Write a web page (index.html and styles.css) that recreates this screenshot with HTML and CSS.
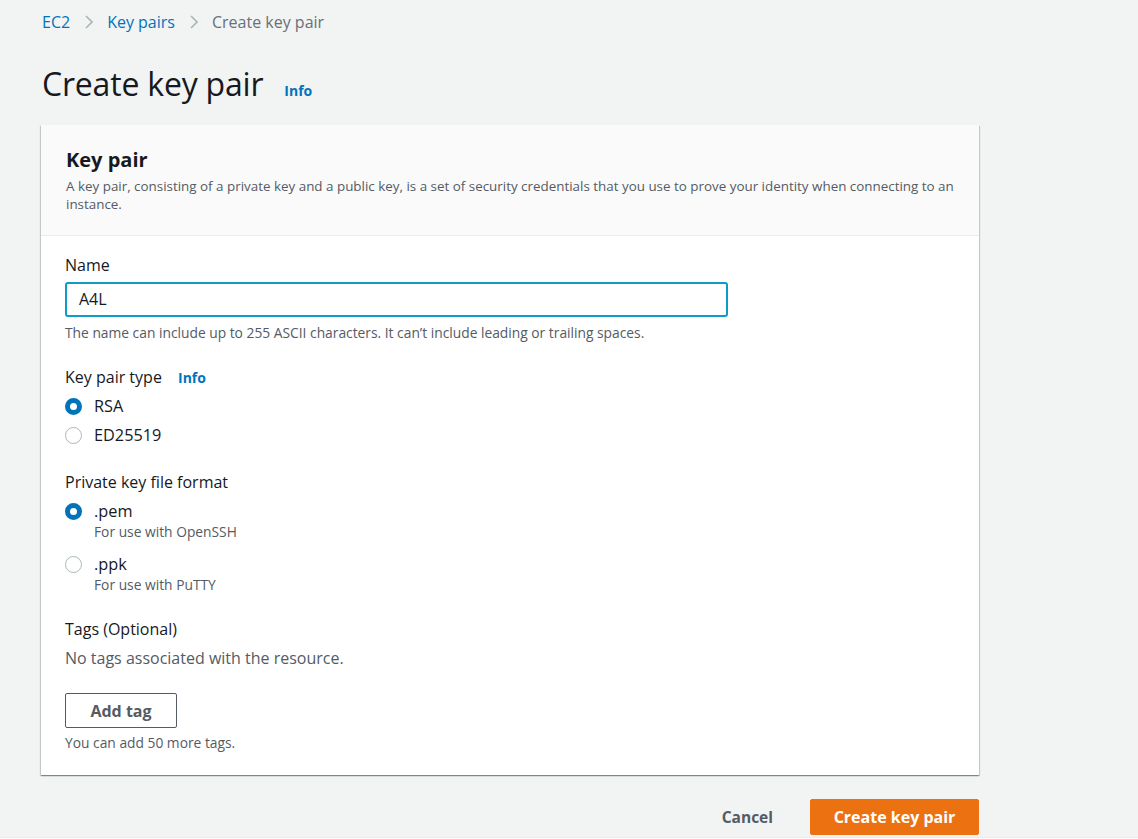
FILE: index.html
```html
<!DOCTYPE html>
<html lang="en">
<head>
<meta charset="utf-8">
<title>Create key pair</title>
<link rel="stylesheet" href="styles.css">
</head>
<body>
<div class="page">
  <nav class="breadcrumb">
    <a class="crumb-link" href="#">EC2</a>
    <svg class="chev" width="8" height="14" viewBox="0 0 8 14"><path d="M1 1l6 6-6 6" fill="none" stroke="#aab7b8" stroke-width="1.6"/></svg>
    <a class="crumb-link" href="#">Key pairs</a>
    <svg class="chev" width="8" height="14" viewBox="0 0 8 14"><path d="M1 1l6 6-6 6" fill="none" stroke="#aab7b8" stroke-width="1.6"/></svg>
    <span class="crumb-current">Create key pair</span>
  </nav>

  <div class="title-row">
    <h1 class="title">Create key pair</h1>
    <a class="info" href="#">Info</a>
  </div>

  <section class="card">
    <header class="card-header">
      <h2 class="card-title">Key pair</h2>
      <p class="card-desc">A key pair, consisting of a private key and a public key, is a set of security credentials that you use to prove your identity when connecting to an instance.</p>
    </header>
    <div class="card-body">
      <div class="label">Name</div>
      <div class="input">A4L</div>
      <div class="hint hint-name">The name can include up to 255 ASCII characters. It can’t include leading or trailing spaces.</div>

      <div class="label label-gap">Key pair type <a class="info info-small" href="#">Info</a></div>
      <div class="radio first"><span class="dot checked"></span><span class="radio-text">RSA</span></div>
      <div class="radio second"><span class="dot"></span><span class="radio-text">ED25519</span></div>

      <div class="label label-gap">Private key file format</div>
      <div class="radio first-b"><span class="dot checked"></span><span class="radio-text">.pem</span></div>
      <div class="radio-desc">For use with OpenSSH</div>
      <div class="radio third"><span class="dot"></span><span class="radio-text">.ppk</span></div>
      <div class="radio-desc">For use with PuTTY</div>

      <div class="label label-gap">Tags (Optional)</div>
      <div class="empty">No tags associated with the resource.</div>
      <button class="btn-secondary" type="button">Add tag</button>
      <div class="hint">You can add 50 more tags.</div>
    </div>
  </section>

  <div class="actions">
    <button class="btn-link" type="button">Cancel</button>
    <button class="btn-primary" type="button">Create key pair</button>
  </div>
</div>
<div class="bottom-strip"></div>
</body>
</html>
```

FILE: styles.css
```css
html, body {
  margin: 0;
  padding: 0;
  background: #f2f3f3;
  height: 100%;
  overflow: hidden;
}
body {
  font-family: "Open Sans", "Liberation Sans", sans-serif;
  color: #16191f;
}
.page {
  width: 938px;
  padding-left: 41px;
}
.breadcrumb {
  display: flex;
  align-items: center;
  padding-top: 12px;
  padding-left: 1px;
  height: 20px;
  font-size: 16px;
  line-height: 20px;
}
.crumb-link {
  color: #0073bb;
  text-decoration: none;
}
.crumb-current {
  color: #687078;
}
.chev {
  margin: 0 14px 0 15px;
}
.title-row {
  display: flex;
  align-items: baseline;
  margin-top: 34px;
  padding-left: 1px;
}
.title {
  margin: 0;
  font-size: 32px;
  line-height: 36px;
  font-weight: 400;
  letter-spacing: -0.2px;
}
.info {
  color: #0073bb;
  font-weight: 700;
  text-decoration: none;
  font-size: 14px;
  margin-left: 21px;
}
.info-small {
  margin-left: 12px;
}
.card {
  margin-top: 23px;
  background: #ffffff;
  box-shadow: 0 1px 1px 0 rgba(0, 28, 36, 0.3), 1px 1px 1px 0 rgba(0, 28, 36, 0.15), -1px 1px 1px 0 rgba(0, 28, 36, 0.15);
}
.card-header {
  background: #fafafa;
  border-bottom: 1px solid #eaeded;
  padding: 23px 20px 22px 25px;
}
.card-title {
  margin: 0;
  font-size: 20px;
  line-height: 24px;
  font-weight: 700;
}
.card-desc {
  margin: 5px 0 0 0;
  font-size: 13.4px;
  line-height: 18px;
  color: #545b64;
}
.card-body {
  padding: 19px 24px 23px 24px;
}
.label {
  font-size: 16px;
  line-height: 20px;
  color: #16191f;
}
.label-gap {
  margin-top: 25px;
}
.input {
  box-sizing: border-box;
  margin-top: 7px;
  width: 663px;
  height: 35px;
  border: 2px solid #0f9bc8;
  border-radius: 3px;
  padding-left: 12px;
  font-size: 16px;
  line-height: 31px;
  color: #16191f;
  background: #fff;
}
.hint {
  margin-top: 6px;
  font-size: 13.8px;
  line-height: 18px;
  color: #545b64;
}
.hint-name {
  margin-top: 7px;
}
.radio {
  display: flex;
  align-items: center;
  height: 24px;
  font-size: 16.3px;
}
.radio.first { margin-top: 6px; }
.radio.first-b { margin-top: 7px; }
.radio.second { margin-top: 5px; }
.radio.third { margin-top: 11px; }
.dot {
  box-sizing: border-box;
  width: 17px;
  height: 17px;
  border-radius: 50%;
  border: 1.5px solid #aab7b8;
  background: #fff;
}
.dot.checked {
  border: 5px solid #0073bb;
}
.radio-text {
  margin-left: 12px;
}
.radio-desc {
  padding-left: 29px;
  font-size: 13.8px;
  line-height: 18px;
  color: #545b64;
}
.empty {
  margin-top: 8px;
  font-size: 16px;
  line-height: 22px;
  color: #545b64;
}
.btn-secondary {
  display: block;
  margin-top: 24px;
  box-sizing: border-box;
  width: 112px;
  height: 35px;
  background: #fff;
  border: 1px solid #545b64;
  border-radius: 2px;
  font-family: inherit;
  font-size: 16px;
  font-weight: 700;
  color: #545b64;
  padding: 0;
}
.actions {
  display: flex;
  justify-content: flex-end;
  align-items: center;
  margin-top: 24px;
}
.btn-link {
  background: none;
  border: none;
  font-family: inherit;
  font-size: 15.5px;
  font-weight: 700;
  color: #545b64;
  padding: 0;
  margin-right: 37px;
}
.btn-primary {
  box-sizing: border-box;
  width: 169px;
  height: 36px;
  background: #ec7211;
  border: 1px solid #ec7211;
  border-radius: 2px;
  color: #fff;
  font-family: inherit;
  font-size: 16px;
  font-weight: 700;
  padding: 0;
}
.bottom-strip {
  margin-top: 2px;
  height: 10px;
  background: #fafafa;
  border-top: 1px solid #eaeded;
}
```
